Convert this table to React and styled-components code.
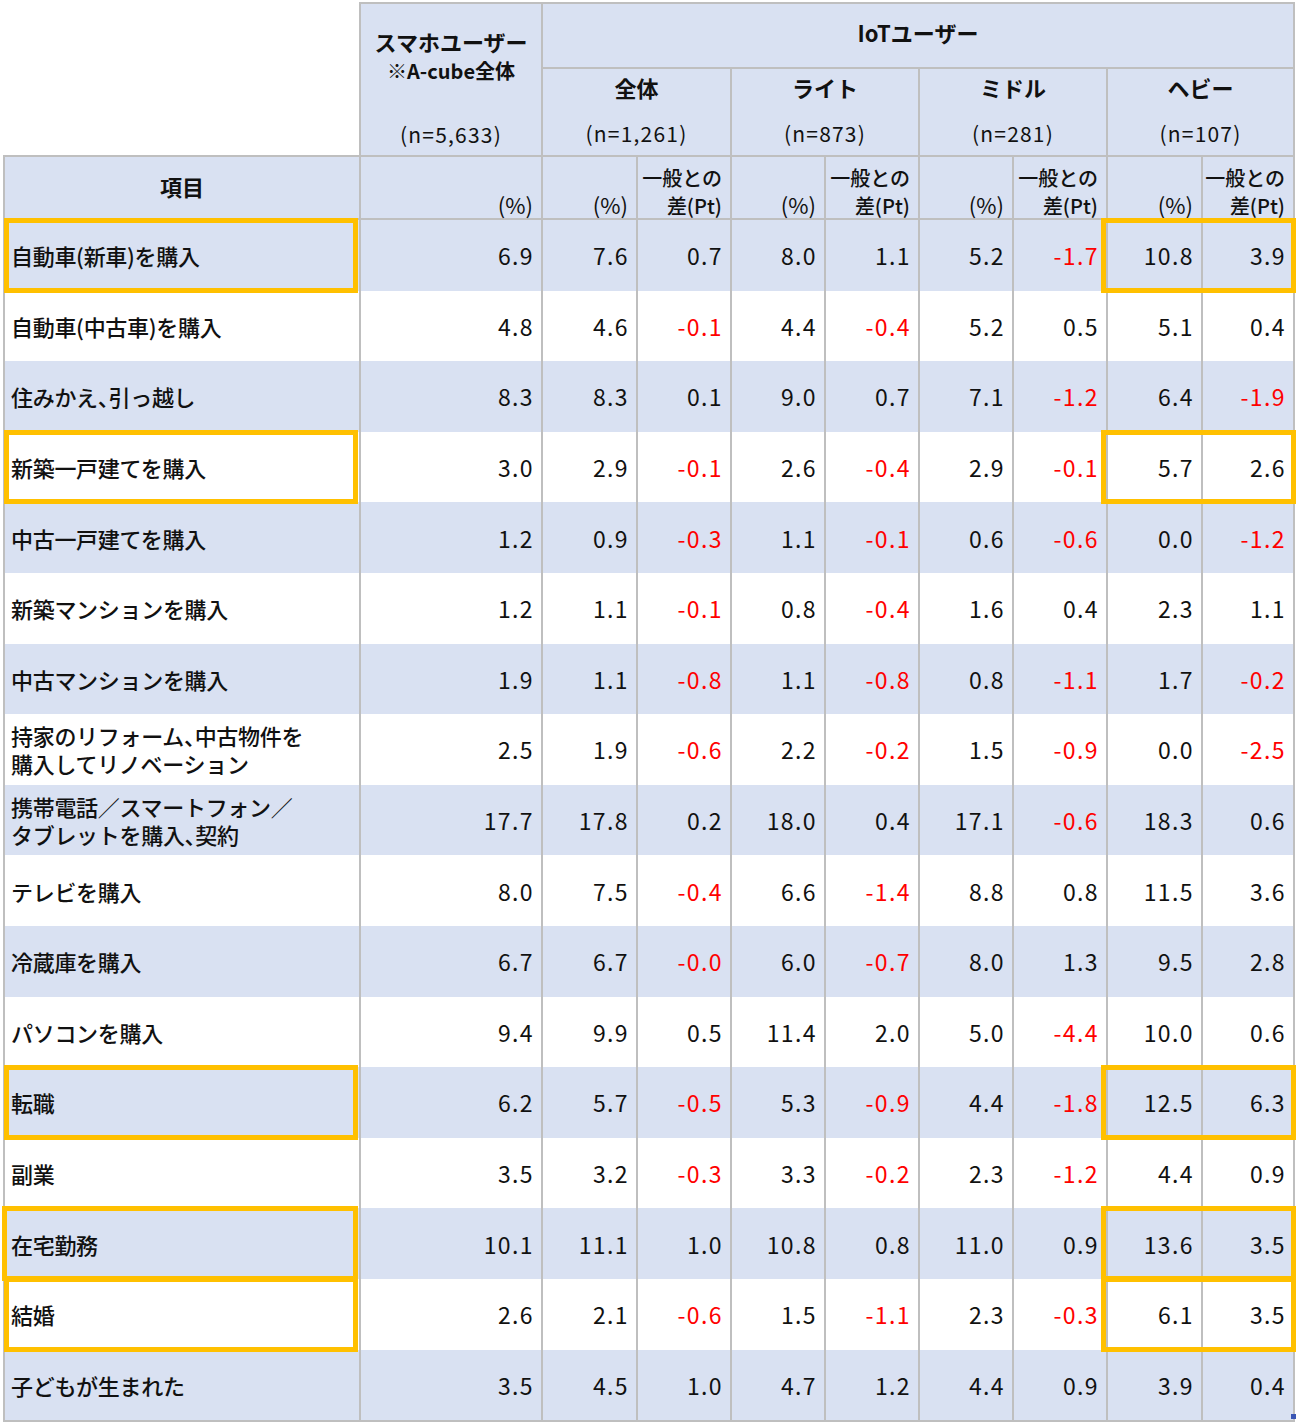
import React from 'react';
import styled, { createGlobalStyle, css } from 'styled-components';

const BLUE = '#d9e1f2';
const LINE = '#bfbfbf';
const ORANGE = '#ffc000';
const COLS = '356px 182px 95px 94px 94px 94px 94px 94px 95px 94px';

const GlobalStyle = createGlobalStyle`
  body {
    margin: 0;
    background: #fff;
    color: #111;
    font-family: "Noto Sans CJK JP", "Noto Sans", sans-serif;
  }
`;

const Page = styled.div`
  width: 1300px;
  height: 1425px;
  padding: 2px 0 0 3px;
  box-sizing: border-box;
`;

const Table = styled.div`
  width: 1292px;
`;

const Head = styled.div`
  display: grid;
  grid-template-columns: ${COLS};
  grid-template-rows: 65px 88px 65px;
`;

const lines = css`
  box-sizing: border-box;
  border-left: 2px solid ${LINE};
  ${(p) => p.$top && `border-top: 2px solid ${LINE};`}
  ${(p) => p.$right && `border-right: 2px solid ${LINE};`}
  ${(p) => p.$bottom && `border-bottom: 2px solid ${LINE};`}
`;

const Blank = styled.div`
  grid-column: 1;
  grid-row: 1 / 3;
`;

const HeadCell = styled.div`
  ${lines};
  grid-column: ${(p) => p.$col};
  grid-row: ${(p) => p.$row};
  background: ${BLUE};
  display: flex;
  flex-direction: column;
  align-items: center;
  justify-content: ${(p) => p.$justify || 'center'};
  padding: ${(p) => p.$pad || '0'};
  font-size: 22px;
  line-height: 28px;
`;

const Title = styled.div`
  font-weight: 700;
  font-size: 22px;
`;

const Note = styled.div`
  font-weight: 700;
  font-size: 20px;
  line-height: 24px;
  margin-top: 4px;
`;

const Count = styled.div`
  font-size: 21px;
  letter-spacing: 1.2px;
  margin-top: ${(p) => (p.$push ? 'auto' : '0')};
`;

const UnitCell = styled(HeadCell)`
  align-items: flex-end;
  justify-content: flex-end;
  padding: 0 8px 0 0;
  text-align: right;
`;

const Unit = styled.div`
  font-size: ${(p) => (p.$strong ? 20 : 22)}px;
  font-weight: ${(p) => (p.$strong ? 500 : 400)};
  white-space: nowrap;
  position: relative;
  top: ${(p) => (p.$strong ? 2 : 0)}px;
`;

const Body = styled.div`
  position: relative;
  border-bottom: 2px solid ${LINE};
`;

const Row = styled.div`
  display: grid;
  grid-template-columns: ${COLS};
  height: 70.6px;
  background: ${(p) => (p.$alt ? BLUE : '#fff')};
`;

const Label = styled.div`
  ${lines};
  grid-column: 1;
  grid-row: 1;
  display: flex;
  align-items: center;
  padding-left: 6px;
  font-size: 22px;
  font-weight: 500;
  line-height: 28px;
  letter-spacing: -0.3px;
  font-feature-settings: "halt";
`;

const Num = styled.div`
  ${lines};
  grid-column: ${(p) => p.$col};
  grid-row: 1;
  display: flex;
  align-items: center;
  justify-content: flex-end;
  padding-right: 7px;
  font-size: 23px;
  letter-spacing: 1.4px;
  color: ${(p) => (p.$neg ? '#ff0000' : '#111')};
`;

const Highlight = styled.div`
  position: relative;
  z-index: 1;
  grid-row: 1;
  grid-column: ${(p) => (p.$heavy ? '9 / span 2' : '1')};
  margin: ${(p) => (p.$heavy ? '-2px -1px -2px -5px' : `-2px 1px -2px ${p.$wide ? -1 : 1}px`)};
  border: 5px solid ${ORANGE};
  pointer-events: none;
`;

const Handle = styled.div`
  position: absolute;
  right: -1px;
  bottom: 1px;
  width: 5px;
  height: 5px;
  background: #3b56b4;
`;

const groups = [
  { name: '全体', n: '(n=1,261)', col: '3 / span 2' },
  { name: 'ライト', n: '(n=873)', col: '5 / span 2' },
  { name: 'ミドル', n: '(n=281)', col: '7 / span 2' },
  { name: 'ヘビー', n: '(n=107)', col: '9 / span 2' },
];

const rows = [
  { label: '自動車(新車)を購入', v: ['6.9', '7.6', '0.7', '8.0', '1.1', '5.2', '-1.7', '10.8', '3.9'], hl: true },
  { label: '自動車(中古車)を購入', v: ['4.8', '4.6', '-0.1', '4.4', '-0.4', '5.2', '0.5', '5.1', '0.4'] },
  { label: '住みかえ、引っ越し', v: ['8.3', '8.3', '0.1', '9.0', '0.7', '7.1', '-1.2', '6.4', '-1.9'] },
  { label: '新築一戸建てを購入', v: ['3.0', '2.9', '-0.1', '2.6', '-0.4', '2.9', '-0.1', '5.7', '2.6'], hl: true },
  { label: '中古一戸建てを購入', v: ['1.2', '0.9', '-0.3', '1.1', '-0.1', '0.6', '-0.6', '0.0', '-1.2'] },
  { label: '新築マンションを購入', v: ['1.2', '1.1', '-0.1', '0.8', '-0.4', '1.6', '0.4', '2.3', '1.1'] },
  { label: '中古マンションを購入', v: ['1.9', '1.1', '-0.8', '1.1', '-0.8', '0.8', '-1.1', '1.7', '-0.2'] },
  { label: ['持家のリフォーム、中古物件を', '購入してリノベーション'], v: ['2.5', '1.9', '-0.6', '2.2', '-0.2', '1.5', '-0.9', '0.0', '-2.5'] },
  { label: ['携帯電話／スマートフォン／', 'タブレットを購入、契約'], v: ['17.7', '17.8', '0.2', '18.0', '0.4', '17.1', '-0.6', '18.3', '0.6'] },
  { label: 'テレビを購入', v: ['8.0', '7.5', '-0.4', '6.6', '-1.4', '8.8', '0.8', '11.5', '3.6'] },
  { label: '冷蔵庫を購入', v: ['6.7', '6.7', '-0.0', '6.0', '-0.7', '8.0', '1.3', '9.5', '2.8'] },
  { label: 'パソコンを購入', v: ['9.4', '9.9', '0.5', '11.4', '2.0', '5.0', '-4.4', '10.0', '0.6'] },
  { label: '転職', v: ['6.2', '5.7', '-0.5', '5.3', '-0.9', '4.4', '-1.8', '12.5', '6.3'], hl: true },
  { label: '副業', v: ['3.5', '3.2', '-0.3', '3.3', '-0.2', '2.3', '-1.2', '4.4', '0.9'] },
  { label: '在宅勤務', v: ['10.1', '11.1', '1.0', '10.8', '0.8', '11.0', '0.9', '13.6', '3.5'], hl: true, wide: true },
  { label: '結婚', v: ['2.6', '2.1', '-0.6', '1.5', '-1.1', '2.3', '-0.3', '6.1', '3.5'], hl: true },
  { label: '子どもが生まれた', v: ['3.5', '4.5', '1.0', '4.7', '1.2', '4.4', '0.9', '3.9', '0.4'] },
];

const Header = () => (
  <Head>
    <Blank />
    <HeadCell $col="2" $row="1 / 3" $top $justify="flex-start" $pad="23px 0 7px">
      <Title>スマホユーザー</Title>
      <Note>※A-cube全体</Note>
      <Count $push>(n=5,633)</Count>
    </HeadCell>
    <HeadCell $col="3 / 11" $row="1" $top $right $pad="0 0 8px">
      <Title>IoTユーザー</Title>
    </HeadCell>
    {groups.map((g, i) => (
      <HeadCell key={g.name} $col={g.col} $row="2" $top $right={i === 3} $justify="space-between" $pad="4px 0 8px">
        <Title>{g.name}</Title>
        <Count>{g.n}</Count>
      </HeadCell>
    ))}
    <HeadCell $col="1" $row="3" $top $bottom $pad="0 0 4px">
      <Title>項目</Title>
    </HeadCell>
    <UnitCell $col="2" $row="3" $top $bottom>
      <Unit>(%)</Unit>
    </UnitCell>
    {[3, 5, 7, 9].map((c) => (
      <React.Fragment key={c}>
        <UnitCell $col={c} $row="3" $top $bottom>
          <Unit>(%)</Unit>
        </UnitCell>
        <UnitCell $col={c + 1} $row="3" $top $bottom $right={c === 9}>
          <Unit $strong>一般との</Unit>
          <Unit $strong>差(Pt)</Unit>
        </UnitCell>
      </React.Fragment>
    ))}
  </Head>
);

export default function App() {
  return (
    <Page>
      <GlobalStyle />
      <Table>
        <Header />
        <Body>
          {rows.map((r, i) => (
            <Row key={i} $alt={i % 2 === 0}>
              <Label>
                {Array.isArray(r.label) ? (
                  <div>
                    {r.label[0]}
                    <br />
                    {r.label[1]}
                  </div>
                ) : r.label}
              </Label>
              {r.v.map((val, j) => (
                <Num key={j} $col={j + 2} $neg={val.startsWith('-')} $right={j === 8}>
                  {val}
                </Num>
              ))}
              {r.hl && <Highlight $wide={r.wide} />}
              {r.hl && <Highlight $heavy />}
            </Row>
          ))}
          <Handle />
        </Body>
      </Table>
    </Page>
  );
}
